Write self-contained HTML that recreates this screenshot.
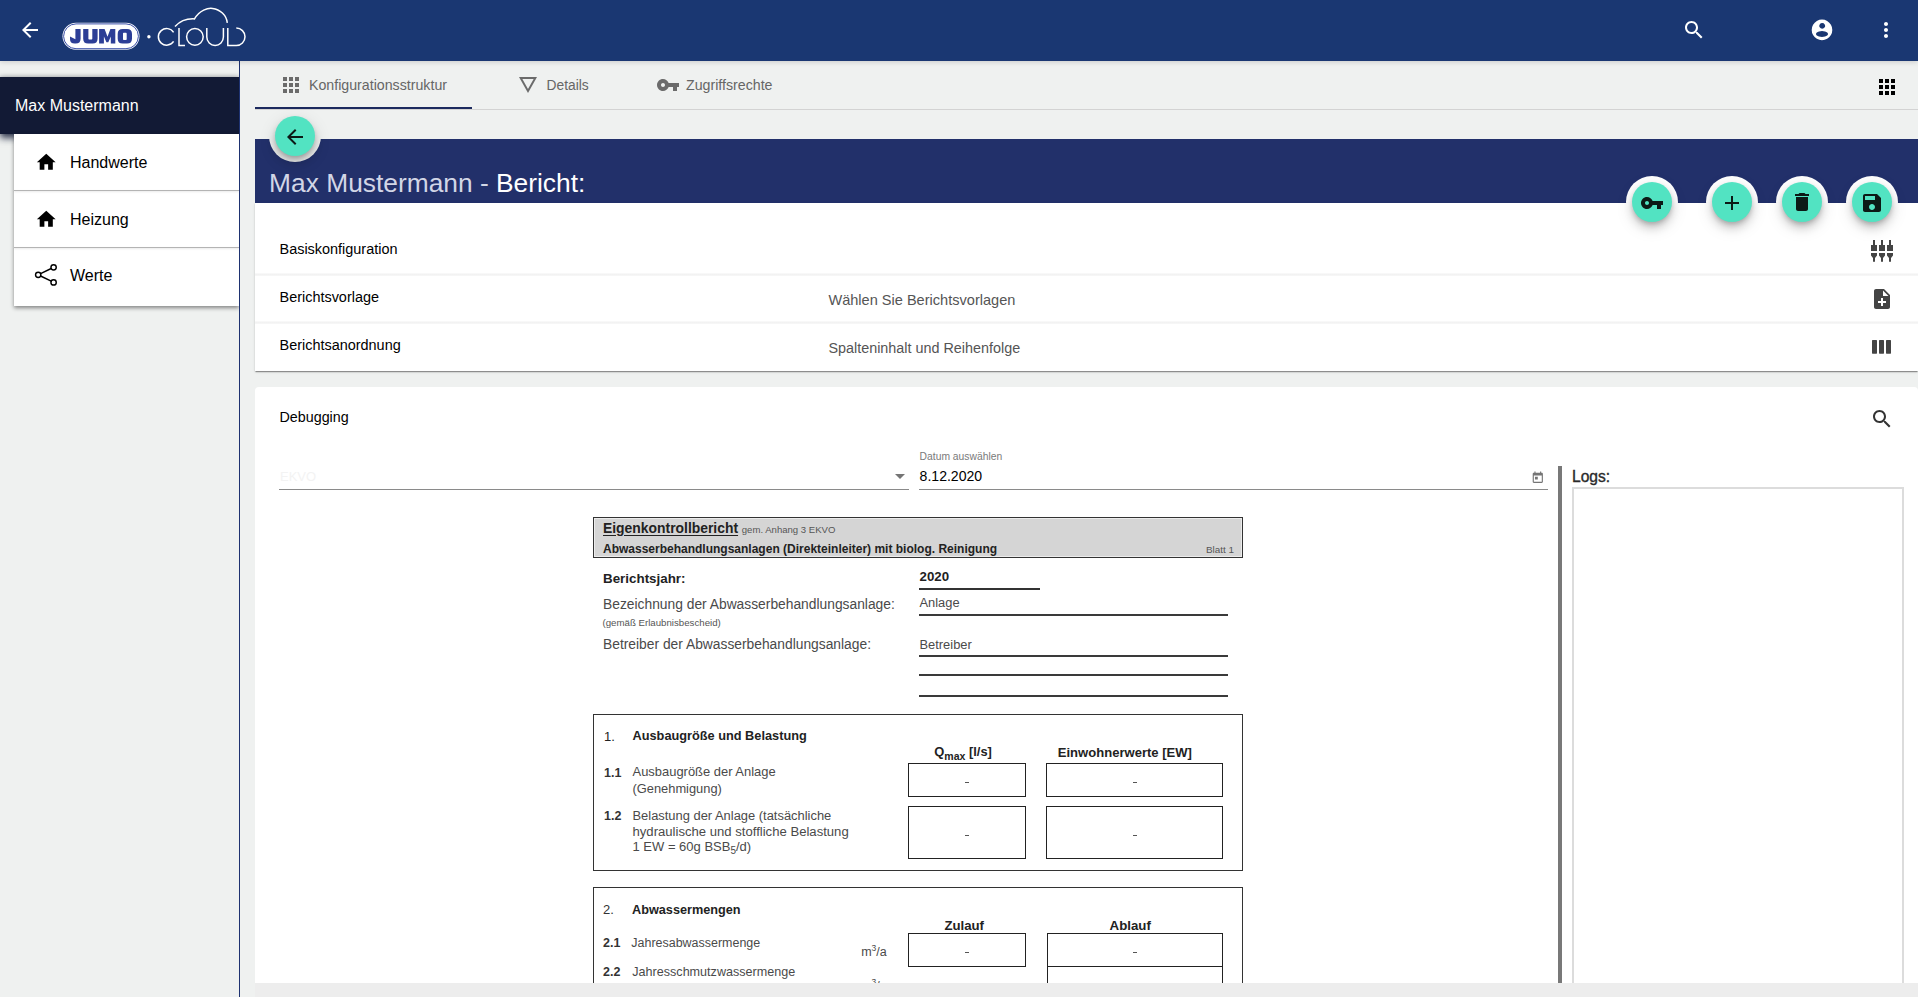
<!DOCTYPE html>
<html><head><meta charset="utf-8">
<style>
*{box-sizing:border-box;margin:0;padding:0}
html,body{width:1918px;height:997px;overflow:hidden}
body{background:#eff1f0;font-family:"Liberation Sans",sans-serif;position:relative;color:#000}
.a{position:absolute}
svg{display:block}
.hdr{left:0;top:0;width:1918px;height:61px;background:#1a3772;z-index:10;box-shadow:0 1px 5px rgba(0,0,0,.16)}
.txt{white-space:nowrap;line-height:1}
</style></head><body>

<!-- header -->
<div class="a hdr" id="hdr">
<svg class="a" style="left:0;top:0" width="1918" height="61" viewBox="0 0 1918 61">
</svg>
<svg class="a" style="left:18px;top:18px" width="24" height="24" viewBox="0 0 24 24"><path fill="#fff" d="M20 11H7.83l5.59-5.59L12 4l-8 8 8 8 1.41-1.41L7.83 13H20v-2z"/></svg>
<svg class="a" style="left:0;top:0" width="260" height="61" viewBox="0 0 260 61">
 <rect x="62.5" y="22.8" width="77" height="27" rx="13.5" fill="#fff"/>
 <rect x="63.6" y="23.9" width="74.8" height="24.8" rx="12.4" fill="none" stroke="#3a4fa8" stroke-width="1"/>
 <g fill="#2c3e96">
  <path d="M75.4 29.1h5.2v9.6c0 3.2-1.7 4.9-4.9 4.9h-0.9c-3.3 0-4.8-1.6-4.8-4.6v-2.4l5.4 2.7z"/>
  <path d="M83.2 29.1h5.2v9.3c0 0.6 0.4 1 1 1h1.9c0.6 0 1-0.4 1-1v-9.3h5.3v9.6c0 3.2-1.8 4.9-5 4.9h-4.5c-3.2 0-4.9-1.7-4.9-4.9z"/>
  <path d="M99.1 29.1h5.5l2.9 7.6 2.9-7.6h4.9v14.5h-4.5v-7.2l-2.5 5.9h-1.9l-2.5-5.9v7.2h-4.8z"/>
  <path d="M122.7 29.1h4.3c3.3 0 5 1.7 5 4.9v4.7c0 3.2-1.7 4.9-5 4.9h-4.3c-3.3 0-5-1.7-5-4.9v-4.7c0-3.2 1.7-4.9 5-4.9zm1.3 3.7c-0.6 0-1 0.4-1 1v5.1c0 0.6 0.4 1 1 1h1.7c0.6 0 1-0.4 1-1v-5.1c0-0.6-0.4-1-1-1z"/>
 </g>
 <circle cx="148.9" cy="36.7" r="1.7" fill="#fff"/>
 <g fill="none" stroke="#fff" stroke-width="1.5">
  <path d="M173.6 32.3A8.3 8.3 0 1 0 173.6 41.4"/>
  <path d="M179 28.1V45.5H185"/>
  <circle cx="194.9" cy="36.85" r="8.3"/>
  <path d="M206.8 28.1V37.1A8.3 8.3 0 0 0 223.4 37.1V28.1"/>
  <path d="M227.8 28.1V45.5H236.3A8.7 8.7 0 0 0 236.3 28.1"/>
  <path d="M175 26.6C180 21 186 18.5 194.5 18.9C199.5 10 208 7.8 212.5 8.4C220 9.3 226.5 15 227.3 22.9"/>
 </g>
</svg>
<svg class="a" style="left:1682px;top:18px" width="24" height="24" viewBox="0 0 24 24"><path fill="#fff" d="M15.5 14h-.79l-.28-.27C15.41 12.59 16 11.11 16 9.5 16 5.91 13.09 3 9.5 3S3 5.91 3 9.5 5.91 16 9.5 16c1.61 0 3.09-.59 4.23-1.57l.27.28v.79l5 4.99L20.49 19l-4.99-5zm-6 0C7.01 14 5 11.99 5 9.5S7.01 5 9.5 5 14 7.01 14 9.5 11.99 14 9.5 14z"/></svg>
<svg class="a" style="left:1810px;top:18px" width="24" height="24" viewBox="1810 18 24 24"><path fill="#fff" fill-rule="evenodd" d="M1822 19.6a10.3 10.3 0 1 0 0.01 0zM1822.2 23a2.9 2.9 0 1 0 0.01 0zM1822 31.1a6 2.9 0 1 0 0.01 0z"/></svg>
<svg class="a" style="left:1874px;top:18px" width="24" height="24" viewBox="0 0 24 24"><path fill="#fff" d="M12 8c1.1 0 2-.9 2-2s-.9-2-2-2-2 .9-2 2 .9 2 2 2zm0 2c-1.1 0-2 .9-2 2s.9 2 2 2 2-.9 2-2-.9-2-2-2zm0 6c-1.1 0-2 .9-2 2s.9 2 2 2 2-.9 2-2-.9-2-2-2z"/></svg>
</div>

<!-- sidebar -->
<div class="a" style="left:239px;top:61px;width:1px;height:936px;background:#1e3270"></div>
<div class="a" style="left:0;top:0;width:239px;height:997px;overflow:hidden">
<div class="a" style="left:0;top:77px;width:239px;height:57px;background:#121a35;box-shadow:0 4px 7px 0 rgba(18,26,53,.85),0 -1px 4px rgba(0,0,0,.18)"></div>
<div class="a txt" style="left:15px;top:97.9px;font-size:16px;color:#fff">Max Mustermann</div>
<div class="a" style="left:14px;top:134px;width:225px;height:172px;background:#fff;box-shadow:0 2px 4px rgba(0,0,0,.45)"></div>
<div class="a" style="left:14px;top:190px;width:225px;height:1px;background:#b4b4b4;box-shadow:0 1px 2px rgba(0,0,0,.12)"></div>
<div class="a" style="left:14px;top:247px;width:225px;height:1px;background:#b4b4b4;box-shadow:0 1px 2px rgba(0,0,0,.12)"></div>
<svg class="a" style="left:34.8px;top:150.9px" width="22.5" height="22.5" viewBox="0 0 24 24"><path d="M10 20v-6h4v6h5v-8h3L12 3 2 12h3v8z"/></svg>
<svg class="a" style="left:34.8px;top:207.8px" width="22.5" height="22.5" viewBox="0 0 24 24"><path d="M10 20v-6h4v6h5v-8h3L12 3 2 12h3v8z"/></svg>
<svg class="a" style="left:30px;top:260px" width="30" height="30" viewBox="30 260 30 30"><g fill="none" stroke="#000" stroke-width="1.45"><circle cx="53.6" cy="267.3" r="2.65"/><circle cx="38.2" cy="274.8" r="2.65"/><circle cx="53.6" cy="282.4" r="2.65"/><path d="M40.6 273.6L51.2 268.5M40.6 276L51.2 281.2"/></g></svg>
<div class="a txt" style="left:70px;top:154.8px;font-size:16px">Handwerte</div>
<div class="a txt" style="left:70px;top:211.6px;font-size:16px">Heizung</div>
<div class="a txt" style="left:70px;top:268.4px;font-size:16px">Werte</div>

</div>
<!-- tabs -->
<div class="a" style="left:255px;top:109px;width:1663px;height:1px;background:#d3d3d3"></div>
<div class="a" style="left:255px;top:107px;width:217px;height:2px;background:#1c2a5e"></div>
<svg class="a" style="left:279px;top:73px" width="24" height="24" viewBox="0 0 24 24"><path fill="#6b6b6b" d="M4 8h4V4H4v4zm6 12h4v-4h-4v4zm-6 0h4v-4H4v4zm0-6h4v-4H4v4zm6 0h4v-4h-4v4zm6-10v4h4V4h-4zm-6 4h4V4h-4v4zm6 6h4v-4h-4v4zm0 6h4v-4h-4v4z"/></svg>
<div class="a txt" style="left:309px;top:78.1px;font-size:14.2px;color:#666">Konfigurationsstruktur</div>
<svg class="a" style="left:516px;top:73px" width="24" height="24" viewBox="0 0 24 24"><path fill="#6b6b6b" d="M3 4l9 16 9-16H3zm3.38 2h11.25L12 16 6.38 6z"/></svg>
<div class="a txt" style="left:546.6px;top:79.2px;font-size:13.8px;color:#666">Details</div>
<svg class="a" style="left:656px;top:73px" width="24" height="24" viewBox="0 0 24 24"><path fill="#6b6b6b" d="M12.65 10C11.83 7.67 9.61 6 7 6c-3.31 0-6 2.69-6 6s2.69 6 6 6c2.61 0 4.83-1.67 5.65-4H17v4h4v-4h2v-4H12.65zM7 14c-1.1 0-2-.9-2-2s.9-2 2-2 2 .9 2 2-.9 2-2 2z"/></svg>
<div class="a txt" style="left:686px;top:78.1px;font-size:14.2px;color:#666">Zugriffsrechte</div>
<svg class="a" style="left:1875px;top:75px" width="24" height="24" viewBox="0 0 24 24"><path fill="#000" d="M4 8h4V4H4v4zm6 12h4v-4h-4v4zm-6 0h4v-4H4v4zm0-6h4v-4H4v4zm6 0h4v-4h-4v4zm6-10v4h4V4h-4zm-6 4h4V4h-4v4zm6 6h4v-4h-4v4zm0 6h4v-4h-4v4z"/></svg>

<!-- banner -->
<div class="a" style="left:255px;top:139px;width:1663px;height:64px;background:#22306a"></div>
<div class="a txt" style="left:269.1px;top:169.6px;font-size:26.35px;color:#d2d6e6">Max Mustermann - <span style="color:#fff">Bericht:</span></div>
<div class="a" style="left:269px;top:110px;width:52px;height:52px;border-radius:50%;background:#eff1f0"></div>
<div class="a" style="left:275px;top:116px;width:40px;height:40px;border-radius:50%;background:#52e3c2;box-shadow:0 3px 5px -1px rgba(0,0,0,.2),0 6px 10px 0 rgba(0,0,0,.14),0 5px 18px 0 rgba(0,0,0,.12)"></div>
<svg class="a" style="left:283px;top:124.8px" width="24" height="24" viewBox="0 0 24 24"><path fill="#0c1a16" d="M20 11H7.83l5.59-5.59L12 4l-8 8 8 8 1.41-1.41L7.83 13H20v-2z"/></svg>

<!-- card 1 -->
<div class="a" style="left:255px;top:203px;width:1663px;height:168px;background:#fff;box-shadow:0 2px 1px -1px rgba(0,0,0,.25),0 1px 1px 0 rgba(0,0,0,.16),0 1px 3px 0 rgba(0,0,0,.1)"></div>
<div class="a" style="left:255px;top:273px;width:1663px;height:3px;background:linear-gradient(#fbfbfb,#f1f1f1 60%,#fafafa)"></div>
<div class="a" style="left:255px;top:321px;width:1663px;height:3px;background:linear-gradient(#fbfbfb,#f1f1f1 60%,#fafafa)"></div>
<div class="a txt" style="left:279.5px;top:241.7px;font-size:14.45px">Basiskonfiguration</div>
<div class="a txt" style="left:279.5px;top:289.5px;font-size:14.45px">Berichtsvorlage</div>
<div class="a txt" style="left:279.5px;top:337.7px;font-size:14.45px">Berichtsanordnung</div>
<div class="a txt" style="left:828.4px;top:292.5px;font-size:14.57px;color:#555">Wählen Sie Berichtsvorlagen</div>
<div class="a txt" style="left:828.4px;top:340.7px;font-size:14.39px;color:#555">Spalteninhalt und Reihenfolge</div>
<svg class="a" style="left:1868px;top:238px" width="28" height="28" viewBox="1868 238 28 28"><g fill="#444"><path d="M1873 240h2v5h2v6h-6v-6h2z"/><path d="M1871 253h6v2.5l-2 2.5v3.8h-2v-3.8l-2-2.5z"/><path d="M1881 240h2v5h2v6h-6v-6h2z"/><path d="M1879 253h6v2.5l-2 2.5v3.8h-2v-3.8l-2-2.5z"/><path d="M1889 240h2v5h2v6h-6v-6h2z"/><path d="M1887 253h6v2.5l-2 2.5v3.8h-2v-3.8l-2-2.5z"/></g></svg>
<svg class="a" style="left:1870px;top:287px" width="24" height="24" viewBox="0 0 24 24"><path fill="#444" d="M14 2H6c-1.1 0-1.99.9-1.99 2L4 20c0 1.1.89 2 1.99 2H18c1.1 0 2-.9 2-2V8l-6-6zm2 14h-3v3h-2v-3H8v-2h3v-3h2v3h3v2zm-3-7V3.5L18.5 9H13z"/></svg>
<svg class="a" style="left:1868px;top:336px" width="28" height="22" viewBox="1868 336 28 22"><g fill="#444"><rect x="1872" y="340" width="5" height="13.7" rx=".6"/><rect x="1879" y="340" width="5" height="13.7" rx=".6"/><rect x="1886" y="340" width="5" height="13.7" rx=".6"/></g></svg>
<div class="a" style="left:1626px;top:176px;width:52px;height:52px;border-radius:50%;background:#fff"></div>
<div class="a" style="left:1632px;top:182px;width:40px;height:40px;border-radius:50%;background:#52e3c2;box-shadow:0 3px 5px -1px rgba(0,0,0,.2),0 6px 10px 0 rgba(0,0,0,.14),0 5px 18px 0 rgba(0,0,0,.12)"></div>
<svg class="a" style="left:1640px;top:191px" width="24" height="24" viewBox="0 0 24 24"><path fill="#0c1a16" d="M12.65 10C11.83 7.67 9.61 6 7 6c-3.31 0-6 2.69-6 6s2.69 6 6 6c2.61 0 4.83-1.67 5.65-4H17v4h4v-4h2v-4H12.65zM7 14c-1.1 0-2-.9-2-2s.9-2 2-2 2 .9 2 2-.9 2-2 2z"/></svg><div class="a" style="left:1706px;top:176px;width:52px;height:52px;border-radius:50%;background:#fff"></div>
<div class="a" style="left:1712px;top:182px;width:40px;height:40px;border-radius:50%;background:#52e3c2;box-shadow:0 3px 5px -1px rgba(0,0,0,.2),0 6px 10px 0 rgba(0,0,0,.14),0 5px 18px 0 rgba(0,0,0,.12)"></div>
<svg class="a" style="left:1720px;top:191px" width="24" height="24" viewBox="0 0 24 24"><path fill="#0c1a16" d="M19 13h-6v6h-2v-6H5v-2h6V5h2v6h6v2z"/></svg><div class="a" style="left:1776px;top:176px;width:52px;height:52px;border-radius:50%;background:#fff"></div>
<div class="a" style="left:1782px;top:182px;width:40px;height:40px;border-radius:50%;background:#52e3c2;box-shadow:0 3px 5px -1px rgba(0,0,0,.2),0 6px 10px 0 rgba(0,0,0,.14),0 5px 18px 0 rgba(0,0,0,.12)"></div>
<svg class="a" style="left:1790px;top:190px" width="24" height="24" viewBox="0 0 24 24"><path fill="#0c1a16" d="M6 19c0 1.1.9 2 2 2h8c1.1 0 2-.9 2-2V7H6v12zM19 4h-3.5l-1-1h-5l-1 1H5v2h14V4z"/></svg><div class="a" style="left:1846px;top:176px;width:52px;height:52px;border-radius:50%;background:#fff"></div>
<div class="a" style="left:1852px;top:182px;width:40px;height:40px;border-radius:50%;background:#52e3c2;box-shadow:0 3px 5px -1px rgba(0,0,0,.2),0 6px 10px 0 rgba(0,0,0,.14),0 5px 18px 0 rgba(0,0,0,.12)"></div>
<svg class="a" style="left:1860px;top:191px" width="24" height="24" viewBox="0 0 24 24"><path fill="#0c1a16" d="M17 3H5c-1.11 0-2 .9-2 2v14c0 1.1.89 2 2 2h14c1.1 0 2-.9 2-2V7l-4-4zm-5 16c-1.66 0-3-1.34-3-3s1.34-3 3-3 3 1.34 3 3-1.34 3-3 3zm3-10H5V5h10v4z"/></svg>

<!-- card 2 -->
<div class="a" style="left:255px;top:387px;width:1663px;height:596px;background:#fff;border-radius:4px 4px 0 0"></div>
<div class="a txt" style="left:279.5px;top:410px;font-size:14.3px">Debugging</div>
<svg class="a" style="left:1870px;top:407px" width="24" height="24" viewBox="0 0 24 24"><path fill="#333" d="M15.5 14h-.79l-.28-.27C15.41 12.59 16 11.11 16 9.5 16 5.91 13.09 3 9.5 3S3 5.91 3 9.5 5.91 16 9.5 16c1.61 0 3.09-.59 4.23-1.57l.27.28v.79l5 4.99L20.49 19l-4.99-5zm-6 0C7.01 14 5 11.99 5 9.5S7.01 5 9.5 5 14 7.01 14 9.5 11.99 14 9.5 14z"/></svg>
<div class="a txt" style="left:280px;top:470px;font-size:13px;color:#f3f3f3">EKVO</div>
<div class="a" style="left:279px;top:489px;width:630px;height:1px;background:#8a8a8a"></div>
<svg class="a" style="left:895px;top:473.8px" width="10" height="5" viewBox="0 0 10 5"><path fill="#757575" d="M0 0h10L5 5z"/></svg>
<div class="a txt" style="left:919.6px;top:451.8px;font-size:10.32px;color:#7a7a7a">Datum auswählen</div>
<div class="a txt" style="left:919.6px;top:469px;font-size:14.07px;color:#000">8.12.2020</div>
<div class="a" style="left:919px;top:489px;width:629px;height:1px;background:#8a8a8a"></div>
<svg class="a" style="left:1531px;top:471px" width="13.6" height="13.6" viewBox="0 0 24 24"><path fill="#757575" d="M19 3h-1V1h-2v2H8V1H6v2H5c-1.11 0-1.99.9-1.99 2L3 19c0 1.1.89 2 2 2h14c1.1 0 2-.9 2-2V5c0-1.1-.9-2-2-2zm0 16H5V8h14v11zM7 10h5v5H7z"/></svg>
<div class="a" style="left:1558px;top:466px;width:4px;height:517px;background:#787878"></div>
<div class="a txt" style="left:1572px;top:469.2px;font-size:15.6px;color:#2a2a2a;-webkit-text-stroke:0.35px #2a2a2a">Logs:</div>
<div class="a" style="left:1572px;top:487px;width:332px;height:500px;border:2px solid #dcdcdc;border-right-width:2px;background:#fff"></div>

<!-- document -->
<div class="a" style="left:592.8px;top:517px;width:650.40px;height:41.00px;border:1.75px solid #333;background:#d5d5d5;box-shadow:inset 0 0 0 1px #ececec"></div>
<div class="a txt" style="left:603px;top:521.53px;font-size:13.9px;font-weight:bold;color:#222;"><span style="text-decoration:underline;text-underline-offset:1.5px">Eigenkontrollbericht</span></div>
<div class="a txt" style="left:741.8px;top:525.20px;font-size:9.57px;color:#555;">gem. Anhang 3 EKVO</div>
<div class="a txt" style="left:603px;top:543.44px;font-size:12.0px;font-weight:bold;color:#222;">Abwasserbehandlungsanlagen (Direkteinleiter) mit biolog. Reinigung</div>
<div class="a txt" style="left:1205.9px;top:545.32px;font-size:9.9px;color:#555;">Blatt 1</div>
<div class="a txt" style="left:603px;top:571.56px;font-size:13.39px;font-weight:bold;color:#222;">Berichtsjahr:</div>
<div class="a txt" style="left:919.5px;top:570.33px;font-size:13.31px;font-weight:bold;color:#222;">2020</div>
<div class="a" style="left:919px;top:588px;width:121.40px;height:1.6px;background:#333"></div>
<div class="a txt" style="left:603px;top:597.60px;font-size:13.82px;color:#4a4a4a;">Bezeichnung der Abwasserbehandlungsanlage:</div>
<div class="a txt" style="left:919.5px;top:597.39px;font-size:12.88px;color:#4a4a4a;">Anlage</div>
<div class="a" style="left:919px;top:614px;width:309.00px;height:1.6px;background:#3a3a3a"></div>
<div class="a txt" style="left:602.5px;top:617.80px;font-size:9.69px;color:#555;">(gemäß Erlaubnisbescheid)</div>
<div class="a txt" style="left:603px;top:638.30px;font-size:13.82px;color:#4a4a4a;">Betreiber der Abwasserbehandlungsanlage:</div>
<div class="a txt" style="left:919.5px;top:639.09px;font-size:12.89px;color:#4a4a4a;">Betreiber</div>
<div class="a" style="left:919px;top:655px;width:309.00px;height:1.6px;background:#3a3a3a"></div>
<div class="a" style="left:919px;top:674.2px;width:309.00px;height:1.6px;background:#3a3a3a"></div>
<div class="a" style="left:919px;top:695.4px;width:309.00px;height:1.6px;background:#3a3a3a"></div>
<div class="a" style="left:593px;top:713.5px;width:650.20px;height:157.50px;border:1.5px solid #333;"></div>
<div class="a txt" style="left:604px;top:729.99px;font-size:13px;color:#222;">1.</div>
<div class="a txt" style="left:632.5px;top:730.20px;font-size:12.76px;font-weight:bold;color:#222;">Ausbaugröße und Belastung</div>
<div class="a txt" style="left:934.3px;top:745.98px;font-size:12.9px;font-weight:bold;color:#222;">Q<span style="font-size:10.5px;position:relative;top:3.6px">max</span> [l/s]</div>
<div class="a txt" style="left:1057.8px;top:745.84px;font-size:13.06px;font-weight:bold;color:#222;">Einwohnerwerte [EW]</div>
<div class="a txt" style="left:604px;top:766.72px;font-size:12.5px;font-weight:bold;color:#333;">1.1</div>
<div class="a txt" style="left:632.5px;top:766.34px;font-size:12.95px;color:#4a4a4a;">Ausbaugröße der Anlage</div>
<div class="a txt" style="left:632.5px;top:783.40px;font-size:12.87px;color:#4a4a4a;">(Genehmigung)</div>
<div class="a txt" style="left:604px;top:810.32px;font-size:12.5px;font-weight:bold;color:#333;">1.2</div>
<div class="a txt" style="left:632.5px;top:809.97px;font-size:12.91px;color:#4a4a4a;">Belastung der Anlage (tatsächliche</div>
<div class="a txt" style="left:632.5px;top:824.90px;font-size:13.11px;color:#4a4a4a;">hydraulische und stoffliche Belastung</div>
<div class="a txt" style="left:632.5px;top:839.89px;font-size:13.0px;color:#4a4a4a;">1 EW = 60g BSB<span style="font-size:10px;position:relative;top:3.5px">5</span>/d)</div>
<div class="a" style="left:907.7px;top:762.9px;width:118.60px;height:34.50px;border:1.4px solid #222;"></div>
<div class="a" style="left:1046.4px;top:762.9px;width:176.60px;height:34.50px;border:1.4px solid #222;"></div>
<div class="a" style="left:907.7px;top:806.2px;width:118.60px;height:52.50px;border:1.4px solid #222;"></div>
<div class="a" style="left:1046.4px;top:806.2px;width:176.60px;height:52.50px;border:1.4px solid #222;"></div>
<div class="a" style="left:965px;top:782px;width:4.00px;height:1px;background:#555"></div>
<div class="a" style="left:1133px;top:782px;width:4.00px;height:1px;background:#555"></div>
<div class="a" style="left:965px;top:835px;width:4.00px;height:1px;background:#555"></div>
<div class="a" style="left:1133px;top:835px;width:4.00px;height:1px;background:#555"></div>
<div class="a" style="left:593px;top:886.9px;width:650.00px;height:113.10px;border:1.5px solid #333;"></div>
<div class="a txt" style="left:603.1px;top:903.39px;font-size:13px;color:#333;">2.</div>
<div class="a txt" style="left:632px;top:903.65px;font-size:12.7px;font-weight:bold;color:#222;">Abwassermengen</div>
<div class="a txt" style="left:944.4px;top:918.72px;font-size:13.2px;font-weight:bold;color:#222;">Zulauf</div>
<div class="a txt" style="left:1109.6px;top:918.66px;font-size:13.28px;font-weight:bold;color:#222;">Ablauf</div>
<div class="a txt" style="left:603px;top:936.52px;font-size:12.5px;font-weight:bold;color:#333;">2.1</div>
<div class="a txt" style="left:631.3px;top:936.53px;font-size:12.48px;color:#4a4a4a;">Jahresabwassermenge</div>
<div class="a txt" style="left:603px;top:965.82px;font-size:12.5px;font-weight:bold;color:#333;">2.2</div>
<div class="a txt" style="left:632.3px;top:965.74px;font-size:12.59px;color:#4a4a4a;">Jahresschmutzwassermenge</div>
<div class="a txt" style="left:861.2px;top:945.82px;font-size:12.5px;color:#4a4a4a;">m<span style="font-size:8.5px;position:relative;top:-5px">3</span>/a</div>
<div class="a txt" style="left:861.2px;top:980.42px;font-size:12.5px;color:#4a4a4a;">m<span style="font-size:8.5px;position:relative;top:-5px">3</span>/a</div>
<div class="a" style="left:908.3px;top:933.3px;width:117.70px;height:33.80px;border:1.4px solid #222;"></div>
<div class="a" style="left:1047px;top:933.3px;width:175.50px;height:33.80px;border:1.4px solid #222;"></div>
<div class="a" style="left:1047px;top:965.7px;width:175.50px;height:44.30px;border:1.4px solid #222;"></div>
<div class="a" style="left:965px;top:952px;width:4.00px;height:1px;background:#555"></div>
<div class="a" style="left:1133px;top:952px;width:4.00px;height:1px;background:#555"></div>
<!-- /document -->
<div class="a" style="left:255px;top:983px;width:1663px;height:14px;background:#ededed"></div>

</body></html>
